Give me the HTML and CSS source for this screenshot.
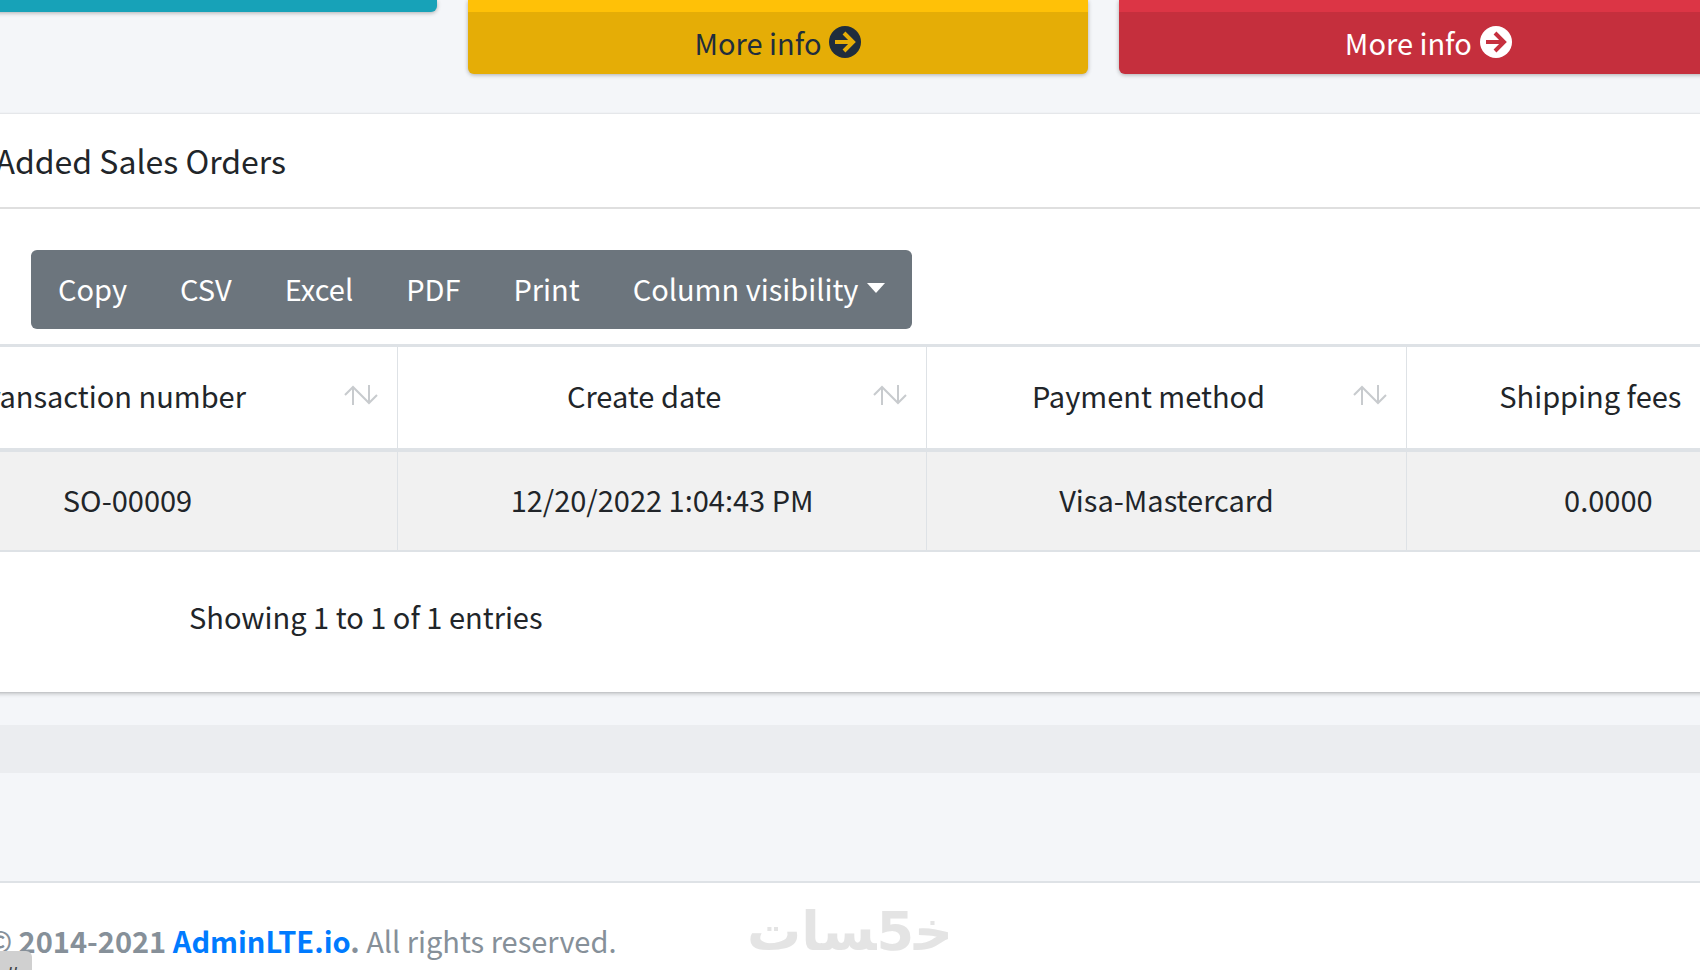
FILE: index.html
```html
<!DOCTYPE html>
<html lang="en">
  <head>
    <meta charset="UTF-8" />
    <meta name="viewport" content="width=device-width, initial-scale=1.0" />
    <title>Dashboard</title>
    <link rel="stylesheet" href="styles.css">
  </head>
  <body>
    <div class="wrapper">
      <section class="stats">
        <div class="small-box bg-info"></div>
        <div class="small-box bg-warning">
          <a href="#" class="small-box-footer">
            More info
            <svg class="arrow" viewBox="0 0 32 32" aria-hidden="true">
              <circle cx="16" cy="16" r="16" />
              <path d="M6 16H24M15 7L24 16L15 25" />
            </svg>
          </a>
        </div>
        <div class="small-box bg-danger">
          <a href="#" class="small-box-footer">
            More info
            <svg class="arrow" viewBox="0 0 32 32" aria-hidden="true">
              <circle cx="16" cy="16" r="16" />
              <path d="M6 16H24M15 7L24 16L15 25" />
            </svg>
          </a>
        </div>
      </section>

      <section class="card">
        <div class="card-header">
          <h3>Recently Added Sales Orders</h3>
        </div>
        <div class="card-body">
          <div class="dt-buttons">
            <button type="button">Copy</button>
            <button type="button">CSV</button>
            <button type="button">Excel</button>
            <button type="button">PDF</button>
            <button type="button">Print</button>
            <button type="button" class="dropdown-toggle">Column visibility</button>
          </div>
          <table class="orders">
            <colgroup>
              <col class="col-number" />
              <col class="col-date" />
              <col class="col-payment" />
              <col class="col-fees" />
            </colgroup>
            <thead>
              <tr>
                <th>
                  Transaction number
                  <svg class="sort" viewBox="0 0 34 20" aria-hidden="true"><path d="M1 10L9 2L25 18L33 10M9 2V20M25 18V0" /></svg>
                </th>
                <th>
                  Create date
                  <svg class="sort" viewBox="0 0 34 20" aria-hidden="true"><path d="M1 10L9 2L25 18L33 10M9 2V20M25 18V0" /></svg>
                </th>
                <th>
                  Payment method
                  <svg class="sort" viewBox="0 0 34 20" aria-hidden="true"><path d="M1 10L9 2L25 18L33 10M9 2V20M25 18V0" /></svg>
                </th>
                <th>Shipping fees</th>
              </tr>
            </thead>
            <tbody>
              <tr>
                <td>SO-00009</td>
                <td>12/20/2022 1:04:43 PM</td>
                <td>Visa-Mastercard</td>
                <td>0.0000</td>
              </tr>
            </tbody>
          </table>
          <div class="dt-info">Showing 1 to 1 of 1 entries</div>
        </div>
      </section>

      <div class="strip"></div>

      <footer class="main-footer">
        <strong>Copyright © 2014-2021 <a href="#">AdminLTE.io</a>.</strong>
        All rights reserved.
      </footer>
    </div>

    <div class="watermark" lang="ar" dir="rtl">خ&zwj;5&zwj;سات</div>
    <div class="link-status">#</div>
  </body>
</html>
```

FILE: styles.css
```css
* {
  box-sizing: border-box;
}

body {
  margin: 0;
  min-height: 100vh;
  overflow: hidden;
  background: #f4f6f9;
  color: #212529;
  font-family: "Source Sans Pro", "Noto Sans CJK SC", sans-serif;
  font-size: 29px;
  line-height: 48px;
}

/* the page is wider than the window on both sides */
.wrapper {
  margin: 0 -151px 0 -182px;
}

/* stat boxes */
.stats {
  display: grid;
  grid-template-columns: repeat(3, 1fr);
  align-items: start;
  gap: 31px;
  margin-right: 113px;
}
.small-box {
  padding-top: 12px;
  border-radius: 0 0 6px 6px;
  box-shadow: 0 1px 4px rgba(0, 0, 0, 0.3);
  overflow: hidden;
}
.bg-info {
  background: #17a2b8;
}
.bg-warning {
  background: #ffc107;
}
.bg-danger {
  background: #dc3545;
}
.small-box-footer {
  display: flex;
  justify-content: center;
  align-items: center;
  gap: 8px;
  height: 62px;
  padding-bottom: 3px;
  background: rgba(0, 0, 0, 0.1);
  color: #1f2d3d;
  text-decoration: none;
}
.bg-danger .small-box-footer {
  color: #fff;
}
.arrow {
  width: 32px;
  height: 32px;
  fill: currentColor;
}
.arrow path {
  fill: none;
  stroke: #e6ae06;
  stroke-width: 4;
}
.bg-danger .arrow path {
  stroke: #c6303e;
}

/* orders card */
.card {
  margin-top: 40px;
  background: #fff;
  box-shadow: 0 0 2px rgba(0, 0, 0, 0.13), 0 2px 4px rgba(0, 0, 0, 0.2);
}
.card-header {
  padding: 22px 42px 23px;
  border-bottom: 2px solid #dfdfdf;
}
.card-header h3 {
  margin: 0;
  font-size: 32px;
  font-weight: 400;
  line-height: 48px;
}
.card-body {
  padding: 41px 40px 52px;
}
.dt-buttons {
  display: inline-flex;
  gap: 1px;
  margin-left: 173px;
  padding: 0 1px;
  background: #6c757d;
  border-radius: 6px;
  vertical-align: top;
}
.dt-buttons button {
  height: 79px;
  padding: 0 26px 4px;
  border: 0;
  background: none;
  color: #fff;
  font: inherit;
  cursor: pointer;
}
.dropdown-toggle::after {
  content: "";
  display: inline-block;
  margin-left: 9px;
  border-top: 10px solid #fff;
  border-left: 9px solid transparent;
  border-right: 9px solid transparent;
  vertical-align: 8px;
}

.orders {
  width: 100%;
  margin-top: 15px;
  table-layout: fixed;
  border-spacing: 0;
  border-top: 3px solid #dee2e6;
  text-align: center;
}
.col-number {
  width: 27.65%;
}
.col-date {
  width: 27.1%;
}
.col-payment {
  width: 24.55%;
}
.orders th,
.orders td {
  border-right: 1px solid #dee2e6;
}
.orders th {
  position: relative;
  height: 105px;
  padding: 0 60px 6px 24px;
  border-bottom: 4px solid #dee2e6;
  font-weight: 400;
}
.orders td {
  height: 100px;
  padding: 0 24px 4px;
  background: #f1f1f1;
  border-bottom: 2px solid #dee2e6;
}
.sort {
  position: absolute;
  top: 38px;
  right: 19px;
  width: 34px;
  height: 20px;
  fill: none;
  stroke: #c8cbce;
  stroke-width: 2;
}
.dt-info {
  margin: 40px 0 0 331px;
}

.strip {
  height: 48px;
  margin: 33px 0 108px;
  background: #ebedf0;
}

/* footer */
.main-footer {
  padding: 33px 21px;
  background: #fff;
  border-top: 2px solid #dee2e6;
  color: #869099;
}
.main-footer a {
  color: #007bff;
  text-decoration: none;
}

.watermark {
  position: fixed;
  left: 0;
  right: 0;
  bottom: 6px;
  color: #e4e4e4;
  font-family: "DejaVu Sans", sans-serif;
  font-size: 54px;
  font-weight: 700;
  line-height: 64px;
  text-align: center;
}
.link-status {
  position: fixed;
  left: 0;
  bottom: -29px;
  width: 24px;
  height: 48px;
  padding-right: 8px;
  box-sizing: content-box;
  border-radius: 0 6px 0 0;
  background: #d0d0d0;
  color: #3c4043;
  font-family: "Open Sans", sans-serif;
  font-size: 24px;
  text-align: center;
}
```
